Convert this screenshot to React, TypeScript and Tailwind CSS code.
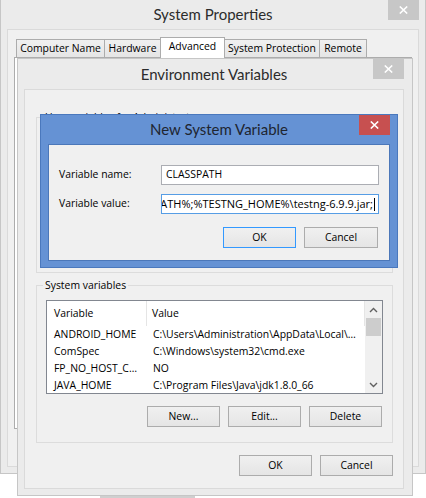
import type { ReactNode } from "react";

// Windows 8 style dialogs: System Properties > Environment Variables > New System Variable

const sysRows: [string, string][] = [
  ["ANDROID_HOME", "C:\\Users\\Administration\\AppData\\Local\\Android\\sdk"],
  ["ComSpec", "C:\\Windows\\system32\\cmd.exe"],
  ["FP_NO_HOST_CHECK", "NO"],
  ["JAVA_HOME", "C:\\Program Files\\Java\\jdk1.8.0_66"],
];

const classpathValue = ".;%JAVA_HOME%\\lib;%CLASSPATH%;%TESTNG_HOME%\\testng-6.9.9.jar;";

function CloseButton({ active = false }: { active?: boolean }) {
  return (
    <div
      className={`absolute right-0 top-0 flex h-[20px] w-[31px] items-center justify-center ${
        active ? "bg-[#c75050]" : "bg-[#c7c7c7]"
      }`}
    >
      <svg width="9" height="8" viewBox="0 0 9 8">
        <path d="M0.8 0.5 L8.2 7.5 M8.2 0.5 L0.8 7.5" stroke="#fff" strokeWidth="1.6" />
      </svg>
    </div>
  );
}

function Button({ children, def = false, w = "w-[73px]" }: { children: ReactNode; def?: boolean; w?: string }) {
  return (
    <div
      className={`flex h-[21px] ${w} items-center justify-center border ${
        def ? "border-[#3399ff]" : "border-[#acacac]"
      } bg-linear-to-b from-[#f0f0f0] to-[#e5e5e5] text-black`}
    >
      {children}
    </div>
  );
}

function Tab({ label, w, selected = false, first = false }: { label: string; w: string; selected?: boolean; first?: boolean }) {
  return (
    <div
      className={`flex ${w} ${first ? "" : "-ml-px"} items-center justify-center whitespace-nowrap border border-b-0 border-[#acacac] ${
        selected ? "relative z-10 -mb-px h-[21px] bg-white pb-[3px]" : "h-[18px] bg-linear-to-b from-[#f0f0f0] to-[#e5e5e5]"
      }`}
    >
      {label}
    </div>
  );
}

function SystemProperties() {
  return (
    <div className="absolute left-0 top-[-1px] flex h-[475px] w-[426px] flex-col border border-[#c6c6c6] bg-[#ebebeb] px-[6px] pb-[6px]">
      <div className="relative flex h-[29px] shrink-0 items-center justify-center">
        <span className="font-['Lato',sans-serif] text-[15px] text-[#2b2b2b]">System Properties</span>
        <CloseButton />
      </div>
      <div className="flex flex-1 flex-col border border-[#dadada] bg-[#f0f0f0] px-[6px] pt-[7px]">
        <div className="ml-[2px] flex items-end">
          <Tab label="Computer Name" w="w-[89px]" first />
          <Tab label="Hardware" w="w-[57px]" />
          <Tab label="Advanced" w="w-[65px]" selected />
          <Tab label="System Protection" w="w-[96px]" />
          <Tab label="Remote" w="w-[48px]" />
        </div>
        <div className="h-[372px] border border-[#acacac] bg-white" />
      </div>
    </div>
  );
}

function Chevron({ up }: { up?: boolean }) {
  return (
    <svg width="9" height="6" viewBox="0 0 9 6">
      <path d={up ? "M1 5 L4.5 1.5 L8 5" : "M1 1 L4.5 4.5 L8 1"} fill="none" stroke="#606060" strokeWidth="1.4" />
    </svg>
  );
}

function SystemVariablesList() {
  return (
    <div className="flex h-[94px] w-full overflow-hidden border border-[#828790] bg-white">
      <div className="min-w-0 flex-1">
        <div className="flex h-[25px] items-center border-r border-[#e5e5e5]">
          <div className="flex h-full w-[100px] shrink-0 items-center border-r border-[#e5e5e5] pl-[7px]">Variable</div>
          <div className="pl-[5px]">Value</div>
        </div>
        {sysRows.map(([name, value]) => (
          <div key={name} className="flex h-[17px] items-center">
            <div className="w-[100px] shrink-0 truncate pl-[7px] pr-[4px]">{name}</div>
            <div className="min-w-0 flex-1 truncate pl-[6px] pr-[4px]">{value}</div>
          </div>
        ))}
      </div>
      <div className="flex w-[17px] shrink-0 flex-col bg-[#f0f0f0]">
        <div className="flex h-[17px] items-center justify-center">
          <Chevron up />
        </div>
        <div className="mx-[1px] h-[18px] bg-[#cdcdcd]" />
        <div className="flex-1" />
        <div className="flex h-[17px] items-center justify-center">
          <Chevron />
        </div>
      </div>
    </div>
  );
}

function EnvironmentVariables() {
  return (
    <div className="absolute left-[17px] top-[58px] flex h-[438px] w-[396px] flex-col border border-[#c6c6c6] bg-[#ebebeb] pb-[6px] pl-[6px] pr-[8px]">
      <div className="relative flex h-[30px] shrink-0 items-center justify-center">
        <span className="font-['Lato',sans-serif] text-[15px] text-[#2b2b2b]">Environment Variables</span>
        <CloseButton />
      </div>
      <div className="flex min-w-0 flex-1 flex-col border border-[#dadada] bg-[#f0f0f0] pl-[11px] pr-[10px] pt-[20px]">
        <fieldset className="h-[163px] min-w-0 border border-[#dcdcdc]">
          <legend className="ml-[6px] px-[2px] leading-[15px]">User variables for Administrator</legend>
        </fieldset>
        <fieldset className="mt-[5px] min-w-0 border border-[#dcdcdc] px-[9px] pb-[15px] pt-[7px]">
          <legend className="ml-[-3px] px-[2px] leading-[15px]">System variables</legend>
          <SystemVariablesList />
          <div className="mr-px mt-[12px] flex justify-end gap-[8px]">
            <Button>New...</Button>
            <Button>Edit...</Button>
            <Button>Delete</Button>
          </div>
        </fieldset>
        <div className="mt-[12px] flex justify-end gap-[8px]">
          <Button>OK</Button>
          <Button>Cancel</Button>
        </div>
      </div>
    </div>
  );
}

function NewSystemVariable() {
  return (
    <div className="absolute left-[40px] top-[114px] flex h-[154px] w-[358px] flex-col border border-[#4a78bd] bg-[#6592d4] px-[7px] pb-[6px]">
      <div className="relative flex h-[29px] shrink-0 items-center justify-center">
        <span className="font-['Lato',sans-serif] text-[15px] text-[#1e2530]">New System Variable</span>
        <CloseButton active />
      </div>
      <div className="flex flex-1 flex-col border border-[#4b77b9] bg-[#f0f0f0] pl-[10px] pr-[10px] pt-[20px]">
        <div className="flex h-[20px] items-center">
          <div className="w-[102px] shrink-0">Variable name:</div>
          <div className="flex h-full w-[218px] items-center border border-[#abadb3] bg-white pl-[4px]">CLASSPATH</div>
        </div>
        <div className="mt-[9px] flex h-[20px] items-center">
          <div className="w-[102px] shrink-0">Variable value:</div>
          <div className="flex h-full w-[218px] items-center justify-end overflow-hidden whitespace-nowrap border border-[#569de5] bg-white pr-[3px] text-[11px]">
            <span className="shrink-0">{classpathValue}</span>
            <span className="ml-px h-[13px] w-px shrink-0 bg-black" />
          </div>
        </div>
        <div className="mr-px mt-[13px] flex justify-end gap-[8px]">
          <Button def>OK</Button>
          <Button w="w-[74px]">Cancel</Button>
        </div>
      </div>
    </div>
  );
}

export default function App() {
  return (
    <div className="relative h-[498px] w-[426px] overflow-hidden bg-white font-['Open_Sans',sans-serif] text-[10.4px] text-black">
      <SystemProperties />
      <EnvironmentVariables />
      <NewSystemVariable />
      <div className="absolute left-[100px] top-[496px] h-[2px] w-[95px] bg-[#cfcfcf]" />
    </div>
  );
}
